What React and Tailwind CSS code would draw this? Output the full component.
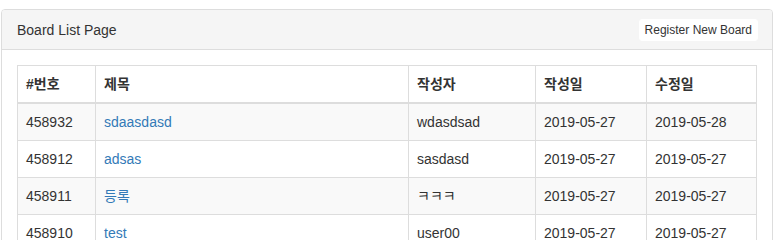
import React from 'react';

const rows = [
  { id: 458932, title: 'sdaasdasd', writer: 'wdasdsad', reg: '2019-05-27', mod: '2019-05-28' },
  { id: 458912, title: 'adsas', writer: 'sasdasd', reg: '2019-05-27', mod: '2019-05-27' },
  { id: 458911, title: '등록', writer: 'ㅋㅋㅋ', reg: '2019-05-27', mod: '2019-05-27' },
  { id: 458910, title: 'test', writer: 'user00', reg: '2019-05-27', mod: '2019-05-27' },
];

const App = () => {
  return (
    <div
      className="bg-white min-h-screen pt-[9px] pl-[1px] pr-[2px] text-[14px] leading-[20px] text-[#333]"
      style={{ fontFamily: '"Liberation Sans", "Noto Sans CJK KR", sans-serif' }}
    >
      <div className="border border-[#ddd] rounded-t-[4px]">
        {/* Panel heading */}
        <div className="h-[40px] px-[15px] flex items-center justify-between bg-[#f5f5f5] border-b border-[#ddd] rounded-t-[3px]">
          <span>Board List Page</span>
          <button className="h-[22px] px-[5px] text-[12px] leading-[18px] bg-white border border-white rounded-[3px] text-[#333] -mr-[1px]">
            Register New Board
          </button>
        </div>

        {/* Panel body */}
        <div className="p-[15px]">
          <table className="w-full border-collapse border border-[#ddd]">
            <thead>
              <tr className="text-left font-bold">
                <th className="w-[78px] p-[8px] border border-[#ddd] border-b-2">#번호</th>
                <th className="w-[313px] p-[8px] border border-[#ddd] border-b-2">제목</th>
                <th className="w-[127px] p-[8px] border border-[#ddd] border-b-2">작성자</th>
                <th className="w-[111px] p-[8px] border border-[#ddd] border-b-2">작성일</th>
                <th className="p-[8px] border border-[#ddd] border-b-2">수정일</th>
              </tr>
            </thead>
            <tbody>
              {rows.map((r, i) => (
                <tr key={r.id} className={i % 2 === 0 ? 'bg-[#f9f9f9]' : 'bg-white'}>
                  <td className="p-[8px] border border-[#ddd]">{r.id}</td>
                  <td className="p-[8px] border border-[#ddd]">
                    <a href="#" className="text-[#337ab7]">{r.title}</a>
                  </td>
                  <td className="p-[8px] border border-[#ddd]">{r.writer}</td>
                  <td className="p-[8px] border border-[#ddd]">{r.reg}</td>
                  <td className="p-[8px] border border-[#ddd]">{r.mod}</td>
                </tr>
              ))}
            </tbody>
          </table>
        </div>
      </div>
    </div>
  );
};

export default App;
